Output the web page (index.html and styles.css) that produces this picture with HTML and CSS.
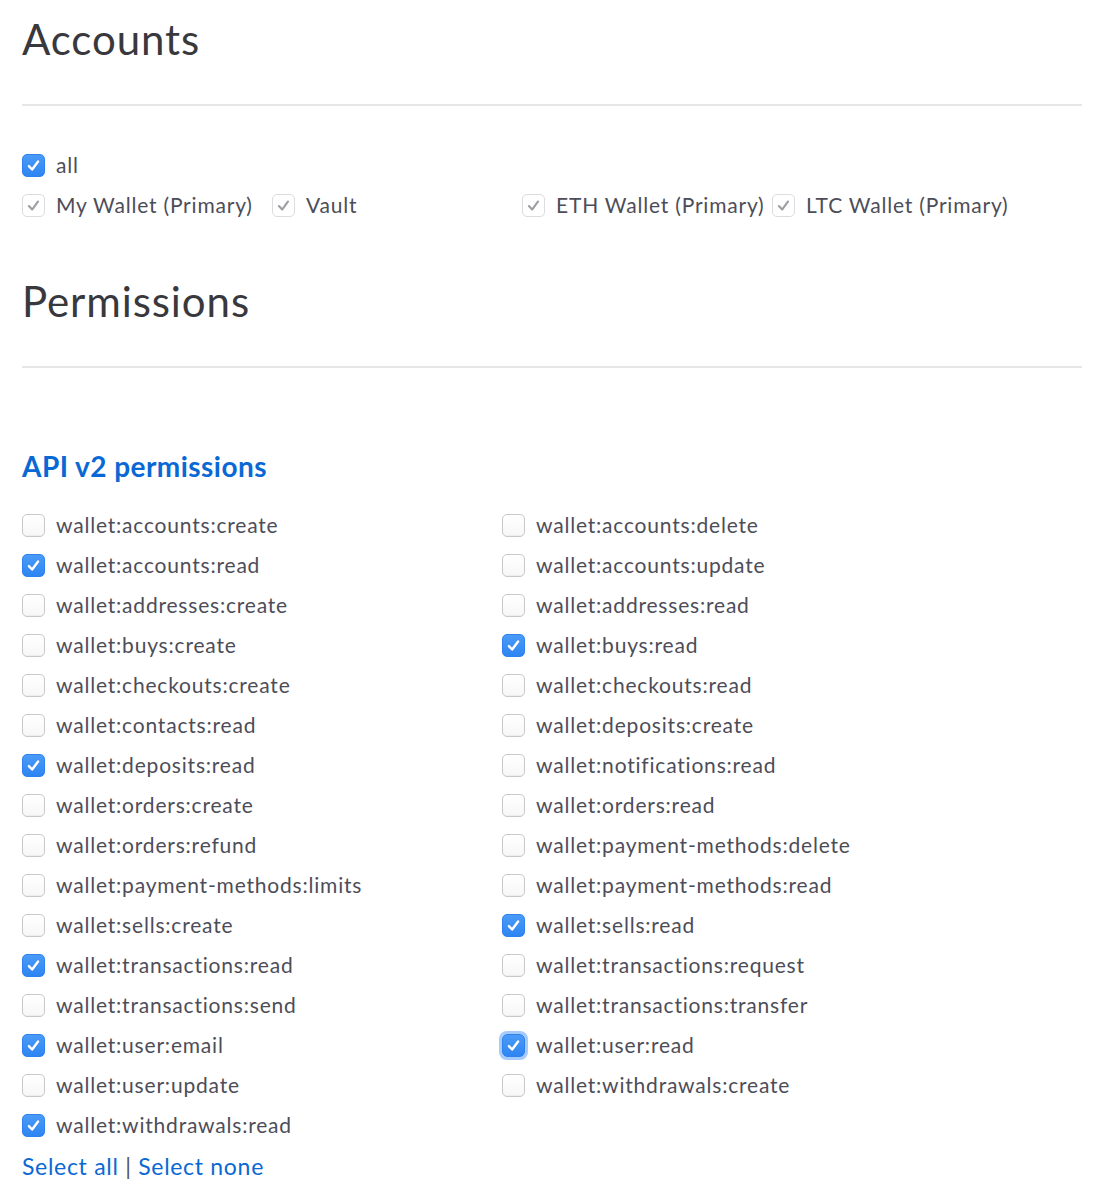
FILE: index.html
```html
<!DOCTYPE html>
<html lang="en">
<head>
<meta charset="utf-8">
<title>API Key Permissions</title>
<link rel="stylesheet" href="styles.css">
</head>
<body>
<div class="page">
  <section class="section">
    <h1 class="section-title">Accounts</h1>
    <hr class="divider">
    <div class="rows">
      <label class="check"><span class="box is-checked"><svg viewBox="0 0 22 22"><path d="M6.2 11.6 L9.6 15.2 L15.8 6.8"/></svg></span><span class="text">all</span></label>
      <div class="account-list">
        <label class="check account"><span class="box is-disabled"><svg viewBox="0 0 22 22"><path d="M6.2 11.6 L9.6 15.2 L15.8 6.8"/></svg></span><span class="text">My Wallet (Primary)</span></label>
        <label class="check account"><span class="box is-disabled"><svg viewBox="0 0 22 22"><path d="M6.2 11.6 L9.6 15.2 L15.8 6.8"/></svg></span><span class="text">Vault</span></label>
        <label class="check account"><span class="box is-disabled"><svg viewBox="0 0 22 22"><path d="M6.2 11.6 L9.6 15.2 L15.8 6.8"/></svg></span><span class="text">ETH Wallet (Primary)</span></label>
        <label class="check account"><span class="box is-disabled"><svg viewBox="0 0 22 22"><path d="M6.2 11.6 L9.6 15.2 L15.8 6.8"/></svg></span><span class="text">LTC Wallet (Primary)</span></label>
      </div>
    </div>
  </section>

  <section class="section perms">
    <h1 class="section-title">Permissions</h1>
    <hr class="divider">
    <h2 class="sub-title">API v2 permissions</h2>
    <div class="perm-grid">
      <label class="check"><span class="box"></span><span class="text">wallet:accounts:create</span></label>
      <label class="check"><span class="box"></span><span class="text">wallet:accounts:delete</span></label>
      <label class="check"><span class="box is-checked"><svg viewBox="0 0 22 22"><path d="M6.2 11.6 L9.6 15.2 L15.8 6.8"/></svg></span><span class="text">wallet:accounts:read</span></label>
      <label class="check"><span class="box"></span><span class="text">wallet:accounts:update</span></label>
      <label class="check"><span class="box"></span><span class="text">wallet:addresses:create</span></label>
      <label class="check"><span class="box"></span><span class="text">wallet:addresses:read</span></label>
      <label class="check"><span class="box"></span><span class="text">wallet:buys:create</span></label>
      <label class="check"><span class="box is-checked"><svg viewBox="0 0 22 22"><path d="M6.2 11.6 L9.6 15.2 L15.8 6.8"/></svg></span><span class="text">wallet:buys:read</span></label>
      <label class="check"><span class="box"></span><span class="text">wallet:checkouts:create</span></label>
      <label class="check"><span class="box"></span><span class="text">wallet:checkouts:read</span></label>
      <label class="check"><span class="box"></span><span class="text">wallet:contacts:read</span></label>
      <label class="check"><span class="box"></span><span class="text">wallet:deposits:create</span></label>
      <label class="check"><span class="box is-checked"><svg viewBox="0 0 22 22"><path d="M6.2 11.6 L9.6 15.2 L15.8 6.8"/></svg></span><span class="text">wallet:deposits:read</span></label>
      <label class="check"><span class="box"></span><span class="text">wallet:notifications:read</span></label>
      <label class="check"><span class="box"></span><span class="text">wallet:orders:create</span></label>
      <label class="check"><span class="box"></span><span class="text">wallet:orders:read</span></label>
      <label class="check"><span class="box"></span><span class="text">wallet:orders:refund</span></label>
      <label class="check"><span class="box"></span><span class="text">wallet:payment-methods:delete</span></label>
      <label class="check"><span class="box"></span><span class="text">wallet:payment-methods:limits</span></label>
      <label class="check"><span class="box"></span><span class="text">wallet:payment-methods:read</span></label>
      <label class="check"><span class="box"></span><span class="text">wallet:sells:create</span></label>
      <label class="check"><span class="box is-checked"><svg viewBox="0 0 22 22"><path d="M6.2 11.6 L9.6 15.2 L15.8 6.8"/></svg></span><span class="text">wallet:sells:read</span></label>
      <label class="check"><span class="box is-checked"><svg viewBox="0 0 22 22"><path d="M6.2 11.6 L9.6 15.2 L15.8 6.8"/></svg></span><span class="text">wallet:transactions:read</span></label>
      <label class="check"><span class="box"></span><span class="text">wallet:transactions:request</span></label>
      <label class="check"><span class="box"></span><span class="text">wallet:transactions:send</span></label>
      <label class="check"><span class="box"></span><span class="text">wallet:transactions:transfer</span></label>
      <label class="check"><span class="box is-checked"><svg viewBox="0 0 22 22"><path d="M6.2 11.6 L9.6 15.2 L15.8 6.8"/></svg></span><span class="text">wallet:user:email</span></label>
      <label class="check"><span class="box is-checked is-focused"><svg viewBox="0 0 22 22"><path d="M6.2 11.6 L9.6 15.2 L15.8 6.8"/></svg></span><span class="text">wallet:user:read</span></label>
      <label class="check"><span class="box"></span><span class="text">wallet:user:update</span></label>
      <label class="check"><span class="box"></span><span class="text">wallet:withdrawals:create</span></label>
      <label class="check"><span class="box is-checked"><svg viewBox="0 0 22 22"><path d="M6.2 11.6 L9.6 15.2 L15.8 6.8"/></svg></span><span class="text">wallet:withdrawals:read</span></label>
    </div>
    <div class="select-links">
      <a href="#" class="link">Select all</a> <span class="sep">|</span> <a href="#" class="link">Select none</a>
    </div>
  </section>
</div>
</body>
</html>
```

FILE: styles.css
```css
* {
  box-sizing: border-box;
}

html, body {
  margin: 0;
  padding: 0;
  background: #ffffff;
}

body {
  font-family: Lato, "Open Sans", "Liberation Sans", sans-serif;
  color: #4a4a56;
}

.page {
  width: 1060px;
  margin-left: 22px;
  padding-top: 15px;
}

.section-title {
  margin: 0;
  font-size: 42px;
  line-height: 48px;
  font-weight: 400;
  color: #38383d;
  letter-spacing: 0.9px;
}

.divider {
  margin: 41px 0 0;
  border: 0;
  height: 2px;
  background: #e6e6e6;
}

.rows {
  margin-top: 39px;
}

.check {
  display: flex;
  align-items: center;
  height: 40px;
  font-size: 21px;
  line-height: 24px;
  color: #4d4d58;
  cursor: pointer;
  letter-spacing: 0.8px;
}

.box {
  flex: none;
  position: relative;
  width: 23px;
  height: 23px;
  margin-right: 11px;
  border: 1px solid #c9c9cc;
  border-radius: 5px;
  background: linear-gradient(#ffffff, #f7f7f7);
  box-shadow: inset 0 -1px 1px rgba(0, 0, 0, 0.04);
}

.box svg {
  position: absolute;
  left: 0;
  top: 0;
  width: 21px;
  height: 21px;
}

.box path {
  fill: none;
  stroke: #ffffff;
  stroke-width: 2.5;
  stroke-linecap: round;
  stroke-linejoin: round;
}

.box.is-checked {
  border-color: #2f82ee;
  background: linear-gradient(#4a9bf8, #2f85f1);
  box-shadow: none;
}

.box.is-disabled {
  border-color: #dcdcdf;
  background: #ffffff;
  box-shadow: none;
}

.box.is-disabled path {
  stroke: #9d9da3;
  stroke-width: 2.2;
}

.box.is-focused {
  box-shadow: 0 0 0 3px rgba(90, 160, 250, 0.55);
}

.account-list {
  display: flex;
}

.account {
  width: 250px;
}

.perms {
  margin-top: 52px;
}

.sub-title {
  margin: 81px 0 0;
  font-size: 28px;
  line-height: 34px;
  font-weight: 700;
  color: #0a68d4;
  letter-spacing: 0.45px;
}

.perm-grid {
  margin-top: 22px;
  display: grid;
  grid-template-columns: 480px 480px;
}

.select-links {
  margin-top: 5px;
  font-size: 23px;
  line-height: 32px;
  color: #55555e;
  letter-spacing: 0.7px;
}

.link {
  color: #0a68d4;
  text-decoration: none;
}

.sep {
  color: #55555e;
}
```
